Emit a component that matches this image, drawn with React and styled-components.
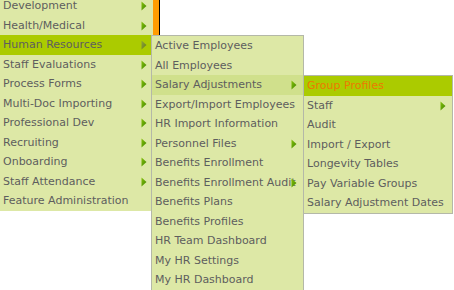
import React from "react";
import styled, { createGlobalStyle, css } from "styled-components";

const GlobalStyle = createGlobalStyle`
  html, body {
    margin: 0;
    padding: 0;
    background: #ffffff;
  }
  body {
    font-family: "DejaVu Sans", Verdana, sans-serif;
    font-size: 11px;
    color: #5e5e5e;
  }
  ul {
    list-style: none;
    margin: 0;
    padding: 0;
  }
`;

const mainMenu = [
  { label: "Development", sub: true },
  { label: "Health/Medical", sub: true },
  { label: "Human Resources", sub: true, open: true },
  { label: "Staff Evaluations", sub: true },
  { label: "Process Forms", sub: true },
  { label: "Multi-Doc Importing", sub: true },
  { label: "Professional Dev", sub: true },
  { label: "Recruiting", sub: true },
  { label: "Onboarding", sub: true },
  { label: "Staff Attendance", sub: true },
  { label: "Feature Administration" },
];

const hrMenu = [
  { label: "Active Employees" },
  { label: "All Employees" },
  { label: "Salary Adjustments", sub: true, open: true },
  { label: "Export/Import Employees" },
  { label: "HR Import Information" },
  { label: "Personnel Files", sub: true },
  { label: "Benefits Enrollment" },
  { label: "Benefits Enrollment Audit", sub: true },
  { label: "Benefits Plans" },
  { label: "Benefits Profiles" },
  { label: "HR Team Dashboard" },
  { label: "My HR Settings" },
  { label: "My HR Dashboard" },
];

const salaryMenu = [
  { label: "Group Profiles", current: true },
  { label: "Staff", sub: true },
  { label: "Audit" },
  { label: "Import / Export" },
  { label: "Longevity Tables" },
  { label: "Pay Variable Groups" },
  { label: "Salary Adjustment Dates" },
];

function Arrow({ $dim }) {
  const id = $dim ? "arrDim" : "arr";
  return (
    <ArrowIcon width="6" height="10" viewBox="0 0 6 10">
      <defs>
        <linearGradient id={id} x1="0" y1="0" x2="1" y2="1">
          <stop offset="0" stopColor={$dim ? "#8ea53c" : "#86c20a"} />
          <stop offset="1" stopColor={$dim ? "#647c1a" : "#3f8400"} />
        </linearGradient>
      </defs>
      <path d="M0.5 0.5 L5.5 5 L0.5 9.5 Z" fill={`url(#${id})`} />
    </ArrowIcon>
  );
}

function MenuList({ items, children, level }) {
  return items.map((item) => (
    <Item key={item.label} $state={item.open ? (level === 0 ? "strong" : "soft") : item.current ? "strong" : ""}>
      <Label $current={item.current}>{item.label}</Label>
      {item.sub && <Arrow $dim={item.open && level === 0} />}
      {item.open && children}
    </Item>
  ));
}

export default function App() {
  return (
    <>
      <GlobalStyle />
      <Page>
        <TopMenu>
          <MenuList items={mainMenu} level={0}>
            <FlyOut $left="calc(100% - 2px)" $width="151px">
              <MenuList items={hrMenu} level={1}>
                <FlyOut $left="100%" $width="148px">
                  <MenuList items={salaryMenu} level={2} />
                </FlyOut>
              </MenuList>
            </FlyOut>
          </MenuList>
        </TopMenu>
        <ContentEdge />
      </Page>
    </>
  );
}

const Page = styled.div`
  position: relative;
  display: flex;
  align-items: flex-start;
  height: 290px;
  overflow: hidden;
`;

const TopMenu = styled.ul`
  position: relative;
  z-index: 2;
  width: 153px;
  flex: none;
  margin-top: -4px !important;
  background: #dde8a6;
`;

const ContentEdge = styled.div`
  flex: none;
  width: 6px;
  height: 100%;
  background: #ff9c00;
  border-right: 1px solid #000000;
`;

const FlyOut = styled.ul`
  position: absolute;
  top: 0;
  left: ${(p) => p.$left};
  width: ${(p) => p.$width};
  background: #dde8a6;
  border: 1px solid #b4b8a8;
`;

const Item = styled.li`
  position: relative;
  height: 19.5px;
  line-height: 20px;
  padding-left: 3px;
  white-space: nowrap;
  ${(p) =>
    p.$state === "strong" &&
    css`
      background: #abcb00;
    `}
  ${(p) =>
    p.$state === "soft" &&
    css`
      background: #d0e08c;
    `}
`;

const Label = styled.span`
  color: ${(p) => (p.$current ? "#ec7a00" : "#5e5e5e")};
`;

const ArrowIcon = styled.svg`
  position: absolute;
  right: 6px;
  top: 5px;
  display: block;
`;
